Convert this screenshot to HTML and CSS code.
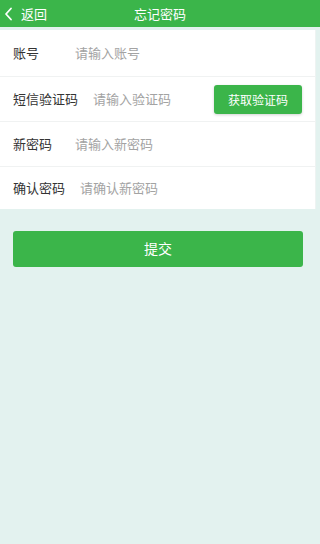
FILE: index.html
```html
<!DOCTYPE html>
<html lang="zh">
<head>
<meta charset="utf-8">
<title>忘记密码</title>
<link rel="stylesheet" href="styles.css">
</head>
<body>
<header class="topbar">
  <a class="back">
    <svg class="chev" width="9" height="14" viewBox="0 0 9 14"><path d="M7 1.5 L2 7 L7 12.5" fill="none" stroke="#fff" stroke-width="1.8" stroke-linecap="round" stroke-linejoin="round"/></svg>
    <span>返回</span>
  </a>
  <h1 class="title">忘记密码</h1>
</header>
<main class="form">
  <div class="row">
    <span class="label">账号</span>
    <span class="ph">请输入账号</span>
  </div>
  <div class="row">
    <span class="label">短信验证码</span>
    <span class="ph">请输入验证码</span>
    <button class="code">获取验证码</button>
  </div>
  <div class="row">
    <span class="label">新密码</span>
    <span class="ph">请输入新密码</span>
  </div>
  <div class="row last">
    <span class="label">确认密码</span>
    <span class="ph">请确认新密码</span>
  </div>
</main>
<div class="actions">
  <button class="submit">提交</button>
</div>
</body>
</html>
```
FILE: styles.css
```css
* { box-sizing: border-box; }
html, body { margin: 0; padding: 0; }
body {
  width: 320px;
  height: 544px;
  background: #e3f2ef;
  font-family: "Noto Sans CJK SC", "Noto Sans", sans-serif;
  overflow: hidden;
}
.topbar {
  height: 27px;
  background: #3bb54a;
  display: flex;
  align-items: center;
  justify-content: center;
  position: relative;
  color: #fff;
}
.back {
  position: absolute;
  left: 4px;
  top: 0;
  height: 27px;
  display: flex;
  align-items: center;
  gap: 8px;
  font-size: 13px;
  color: #fff;
}
.chev { display: block; }
.title {
  margin: 0 0 1px;
  font-size: 13px;
  font-weight: normal;
}
.form {
  margin-top: 3px;
  width: 316px;
  background: #fff;
  border-right: 1px solid #eef3f2;
}
.row {
  height: 45px;
  display: flex;
  align-items: center;
  padding: 0 13px 2px;
  border-top: 1px solid #f0f2f2;
  font-size: 13px;
}
.row:first-child { border-top: none; height: 46px; }
.row.last { height: 43px; }
.label {
  min-width: 47px;
  margin-right: 15px;
  color: #333;
}
.ph {
  color: #a3a3a3;
  flex: 1;
}
.code {
  width: 88px;
  height: 29px;
  margin-top: 2px;
  border: none;
  border-radius: 3px;
  background: #3bb54a;
  color: #fff;
  font-family: inherit;
  font-size: 12px;
  box-shadow: 0 1px 3px rgba(0,0,0,0.18);
  padding: 0;
}
.actions {
  padding: 22px 17px 0 13px;
}
.submit {
  display: block;
  width: 290px;
  height: 36px;
  border: none;
  border-radius: 3px;
  background: #3bb54a;
  color: #fff;
  font-family: inherit;
  font-size: 14px;
  padding: 0 0 2px;
}
```
